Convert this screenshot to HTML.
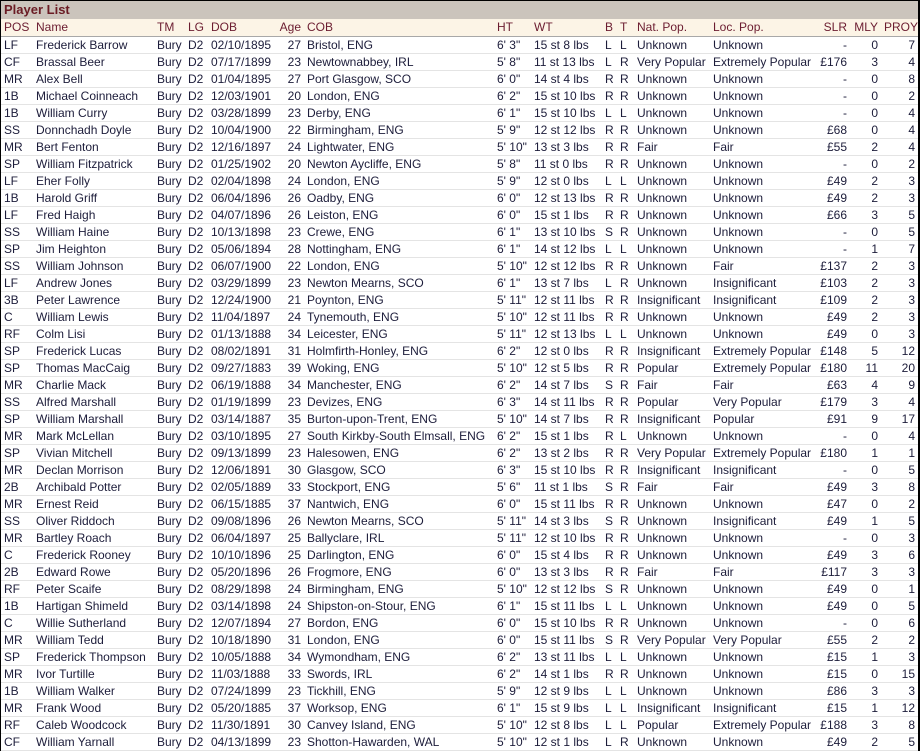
<!DOCTYPE html>
<html><head><meta charset="utf-8"><style>
*{margin:0;padding:0;box-sizing:border-box}
body{width:920px;height:751px;overflow:hidden;background:#fff;font-family:"Liberation Sans",Arial,sans-serif;font-size:12px}
#w{position:absolute;left:0;top:0;width:920px;height:751px;border:1px solid #000;border-right:2px solid #000}
.t{height:18px;background:#cbc4bc;color:#6b1c24;font-weight:bold;font-size:13px;line-height:18px;padding-left:3px}
table{border-collapse:collapse;table-layout:fixed;width:917px}
td,th{height:17px;padding:0 3px;white-space:nowrap;overflow:hidden;line-height:16px;color:#1c1c3a;font-weight:normal;text-align:left}
th{background:#fcf4e6;color:#6b1c30;border-bottom:1px solid #a8a8a8;height:17px}
td{border-bottom:1px solid #e4e4e4}
.r{text-align:right}
</style></head><body><div id="w">
<div class="t">Player List</div>
<table>
<colgroup><col style="width:32px"><col style="width:121px"><col style="width:31px"><col style="width:23px"><col style="width:68px"><col style="width:28px"><col style="width:190px"><col style="width:37px"><col style="width:71px"><col style="width:15px"><col style="width:17px"><col style="width:76px"><col style="width:107px"><col style="width:33px"><col style="width:31px"><col style="width:37px"></colgroup>
<tr><th>POS</th><th>Name</th><th>TM</th><th>LG</th><th>DOB</th><th class="r">Age</th><th>COB</th><th>HT</th><th>WT</th><th>B</th><th>T</th><th>Nat. Pop.</th><th>Loc. Pop.</th><th class="r">SLR</th><th class="r">MLY</th><th class="r">PROY</th></tr>
<tr><td>LF</td><td>Frederick Barrow</td><td>Bury</td><td>D2</td><td>02/10/1895</td><td class="r">27</td><td>Bristol, ENG</td><td>6' 3"</td><td>15 st 8 lbs</td><td>L</td><td>L</td><td>Unknown</td><td>Unknown</td><td class="r">-</td><td class="r">0</td><td class="r">7</td></tr>
<tr><td>CF</td><td>Brassal Beer</td><td>Bury</td><td>D2</td><td>07/17/1899</td><td class="r">23</td><td>Newtownabbey, IRL</td><td>5' 8"</td><td>11 st 13 lbs</td><td>L</td><td>R</td><td>Very Popular</td><td>Extremely Popular</td><td class="r">£176</td><td class="r">3</td><td class="r">4</td></tr>
<tr><td>MR</td><td>Alex Bell</td><td>Bury</td><td>D2</td><td>01/04/1895</td><td class="r">27</td><td>Port Glasgow, SCO</td><td>6' 0"</td><td>14 st 4 lbs</td><td>R</td><td>R</td><td>Unknown</td><td>Unknown</td><td class="r">-</td><td class="r">0</td><td class="r">8</td></tr>
<tr><td>1B</td><td>Michael Coinneach</td><td>Bury</td><td>D2</td><td>12/03/1901</td><td class="r">20</td><td>London, ENG</td><td>6' 2"</td><td>15 st 10 lbs</td><td>R</td><td>R</td><td>Unknown</td><td>Unknown</td><td class="r">-</td><td class="r">0</td><td class="r">2</td></tr>
<tr><td>1B</td><td>William Curry</td><td>Bury</td><td>D2</td><td>03/28/1899</td><td class="r">23</td><td>Derby, ENG</td><td>6' 1"</td><td>15 st 10 lbs</td><td>L</td><td>L</td><td>Unknown</td><td>Unknown</td><td class="r">-</td><td class="r">0</td><td class="r">4</td></tr>
<tr><td>SS</td><td>Donnchadh Doyle</td><td>Bury</td><td>D2</td><td>10/04/1900</td><td class="r">22</td><td>Birmingham, ENG</td><td>5' 9"</td><td>12 st 12 lbs</td><td>R</td><td>R</td><td>Unknown</td><td>Unknown</td><td class="r">£68</td><td class="r">0</td><td class="r">4</td></tr>
<tr><td>MR</td><td>Bert Fenton</td><td>Bury</td><td>D2</td><td>12/16/1897</td><td class="r">24</td><td>Lightwater, ENG</td><td>5' 10"</td><td>13 st 3 lbs</td><td>R</td><td>R</td><td>Fair</td><td>Fair</td><td class="r">£55</td><td class="r">2</td><td class="r">4</td></tr>
<tr><td>SP</td><td>William Fitzpatrick</td><td>Bury</td><td>D2</td><td>01/25/1902</td><td class="r">20</td><td>Newton Aycliffe, ENG</td><td>5' 8"</td><td>11 st 0 lbs</td><td>R</td><td>R</td><td>Unknown</td><td>Unknown</td><td class="r">-</td><td class="r">0</td><td class="r">2</td></tr>
<tr><td>LF</td><td>Eher Folly</td><td>Bury</td><td>D2</td><td>02/04/1898</td><td class="r">24</td><td>London, ENG</td><td>5' 9"</td><td>12 st 0 lbs</td><td>L</td><td>L</td><td>Unknown</td><td>Unknown</td><td class="r">£49</td><td class="r">2</td><td class="r">3</td></tr>
<tr><td>1B</td><td>Harold Griff</td><td>Bury</td><td>D2</td><td>06/04/1896</td><td class="r">26</td><td>Oadby, ENG</td><td>6' 0"</td><td>12 st 13 lbs</td><td>R</td><td>R</td><td>Unknown</td><td>Unknown</td><td class="r">£49</td><td class="r">2</td><td class="r">3</td></tr>
<tr><td>LF</td><td>Fred Haigh</td><td>Bury</td><td>D2</td><td>04/07/1896</td><td class="r">26</td><td>Leiston, ENG</td><td>6' 0"</td><td>15 st 1 lbs</td><td>R</td><td>R</td><td>Unknown</td><td>Unknown</td><td class="r">£66</td><td class="r">3</td><td class="r">5</td></tr>
<tr><td>SS</td><td>William Haine</td><td>Bury</td><td>D2</td><td>10/13/1898</td><td class="r">23</td><td>Crewe, ENG</td><td>6' 1"</td><td>13 st 10 lbs</td><td>S</td><td>R</td><td>Unknown</td><td>Unknown</td><td class="r">-</td><td class="r">0</td><td class="r">5</td></tr>
<tr><td>SP</td><td>Jim Heighton</td><td>Bury</td><td>D2</td><td>05/06/1894</td><td class="r">28</td><td>Nottingham, ENG</td><td>6' 1"</td><td>14 st 12 lbs</td><td>L</td><td>L</td><td>Unknown</td><td>Unknown</td><td class="r">-</td><td class="r">1</td><td class="r">7</td></tr>
<tr><td>SS</td><td>William Johnson</td><td>Bury</td><td>D2</td><td>06/07/1900</td><td class="r">22</td><td>London, ENG</td><td>5' 10"</td><td>12 st 12 lbs</td><td>R</td><td>R</td><td>Unknown</td><td>Fair</td><td class="r">£137</td><td class="r">2</td><td class="r">3</td></tr>
<tr><td>LF</td><td>Andrew Jones</td><td>Bury</td><td>D2</td><td>03/29/1899</td><td class="r">23</td><td>Newton Mearns, SCO</td><td>6' 1"</td><td>13 st 7 lbs</td><td>L</td><td>R</td><td>Unknown</td><td>Insignificant</td><td class="r">£103</td><td class="r">2</td><td class="r">3</td></tr>
<tr><td>3B</td><td>Peter Lawrence</td><td>Bury</td><td>D2</td><td>12/24/1900</td><td class="r">21</td><td>Poynton, ENG</td><td>5' 11"</td><td>12 st 11 lbs</td><td>R</td><td>R</td><td>Insignificant</td><td>Insignificant</td><td class="r">£109</td><td class="r">2</td><td class="r">3</td></tr>
<tr><td>C</td><td>William Lewis</td><td>Bury</td><td>D2</td><td>11/04/1897</td><td class="r">24</td><td>Tynemouth, ENG</td><td>5' 10"</td><td>12 st 11 lbs</td><td>R</td><td>R</td><td>Unknown</td><td>Unknown</td><td class="r">£49</td><td class="r">2</td><td class="r">3</td></tr>
<tr><td>RF</td><td>Colm Lisi</td><td>Bury</td><td>D2</td><td>01/13/1888</td><td class="r">34</td><td>Leicester, ENG</td><td>5' 11"</td><td>12 st 13 lbs</td><td>L</td><td>L</td><td>Unknown</td><td>Unknown</td><td class="r">£49</td><td class="r">0</td><td class="r">3</td></tr>
<tr><td>SP</td><td>Frederick Lucas</td><td>Bury</td><td>D2</td><td>08/02/1891</td><td class="r">31</td><td>Holmfirth-Honley, ENG</td><td>6' 2"</td><td>12 st 0 lbs</td><td>R</td><td>R</td><td>Insignificant</td><td>Extremely Popular</td><td class="r">£148</td><td class="r">5</td><td class="r">12</td></tr>
<tr><td>SP</td><td>Thomas MacCaig</td><td>Bury</td><td>D2</td><td>09/27/1883</td><td class="r">39</td><td>Woking, ENG</td><td>5' 10"</td><td>12 st 5 lbs</td><td>R</td><td>R</td><td>Popular</td><td>Extremely Popular</td><td class="r">£180</td><td class="r">11</td><td class="r">20</td></tr>
<tr><td>MR</td><td>Charlie Mack</td><td>Bury</td><td>D2</td><td>06/19/1888</td><td class="r">34</td><td>Manchester, ENG</td><td>6' 2"</td><td>14 st 7 lbs</td><td>S</td><td>R</td><td>Fair</td><td>Fair</td><td class="r">£63</td><td class="r">4</td><td class="r">9</td></tr>
<tr><td>SS</td><td>Alfred Marshall</td><td>Bury</td><td>D2</td><td>01/19/1899</td><td class="r">23</td><td>Devizes, ENG</td><td>6' 3"</td><td>14 st 11 lbs</td><td>R</td><td>R</td><td>Popular</td><td>Very Popular</td><td class="r">£179</td><td class="r">3</td><td class="r">4</td></tr>
<tr><td>SP</td><td>William Marshall</td><td>Bury</td><td>D2</td><td>03/14/1887</td><td class="r">35</td><td>Burton-upon-Trent, ENG</td><td>5' 10"</td><td>14 st 7 lbs</td><td>R</td><td>R</td><td>Insignificant</td><td>Popular</td><td class="r">£91</td><td class="r">9</td><td class="r">17</td></tr>
<tr><td>MR</td><td>Mark McLellan</td><td>Bury</td><td>D2</td><td>03/10/1895</td><td class="r">27</td><td>South Kirkby-South Elmsall, ENG</td><td>6' 2"</td><td>15 st 1 lbs</td><td>R</td><td>L</td><td>Unknown</td><td>Unknown</td><td class="r">-</td><td class="r">0</td><td class="r">4</td></tr>
<tr><td>SP</td><td>Vivian Mitchell</td><td>Bury</td><td>D2</td><td>09/13/1899</td><td class="r">23</td><td>Halesowen, ENG</td><td>6' 2"</td><td>13 st 2 lbs</td><td>R</td><td>R</td><td>Very Popular</td><td>Extremely Popular</td><td class="r">£180</td><td class="r">1</td><td class="r">1</td></tr>
<tr><td>MR</td><td>Declan Morrison</td><td>Bury</td><td>D2</td><td>12/06/1891</td><td class="r">30</td><td>Glasgow, SCO</td><td>6' 3"</td><td>15 st 10 lbs</td><td>R</td><td>R</td><td>Insignificant</td><td>Insignificant</td><td class="r">-</td><td class="r">0</td><td class="r">5</td></tr>
<tr><td>2B</td><td>Archibald Potter</td><td>Bury</td><td>D2</td><td>02/05/1889</td><td class="r">33</td><td>Stockport, ENG</td><td>5' 6"</td><td>11 st 1 lbs</td><td>S</td><td>R</td><td>Fair</td><td>Fair</td><td class="r">£49</td><td class="r">3</td><td class="r">8</td></tr>
<tr><td>MR</td><td>Ernest Reid</td><td>Bury</td><td>D2</td><td>06/15/1885</td><td class="r">37</td><td>Nantwich, ENG</td><td>6' 0"</td><td>15 st 11 lbs</td><td>R</td><td>R</td><td>Unknown</td><td>Unknown</td><td class="r">£47</td><td class="r">0</td><td class="r">2</td></tr>
<tr><td>SS</td><td>Oliver Riddoch</td><td>Bury</td><td>D2</td><td>09/08/1896</td><td class="r">26</td><td>Newton Mearns, SCO</td><td>5' 11"</td><td>14 st 3 lbs</td><td>S</td><td>R</td><td>Unknown</td><td>Insignificant</td><td class="r">£49</td><td class="r">1</td><td class="r">5</td></tr>
<tr><td>MR</td><td>Bartley Roach</td><td>Bury</td><td>D2</td><td>06/04/1897</td><td class="r">25</td><td>Ballyclare, IRL</td><td>5' 11"</td><td>12 st 10 lbs</td><td>R</td><td>R</td><td>Unknown</td><td>Unknown</td><td class="r">-</td><td class="r">0</td><td class="r">3</td></tr>
<tr><td>C</td><td>Frederick Rooney</td><td>Bury</td><td>D2</td><td>10/10/1896</td><td class="r">25</td><td>Darlington, ENG</td><td>6' 0"</td><td>15 st 4 lbs</td><td>R</td><td>R</td><td>Unknown</td><td>Unknown</td><td class="r">£49</td><td class="r">3</td><td class="r">6</td></tr>
<tr><td>2B</td><td>Edward Rowe</td><td>Bury</td><td>D2</td><td>05/20/1896</td><td class="r">26</td><td>Frogmore, ENG</td><td>6' 0"</td><td>13 st 3 lbs</td><td>R</td><td>R</td><td>Fair</td><td>Fair</td><td class="r">£117</td><td class="r">3</td><td class="r">3</td></tr>
<tr><td>RF</td><td>Peter Scaife</td><td>Bury</td><td>D2</td><td>08/29/1898</td><td class="r">24</td><td>Birmingham, ENG</td><td>5' 10"</td><td>12 st 12 lbs</td><td>S</td><td>R</td><td>Unknown</td><td>Unknown</td><td class="r">£49</td><td class="r">0</td><td class="r">1</td></tr>
<tr><td>1B</td><td>Hartigan Shimeld</td><td>Bury</td><td>D2</td><td>03/14/1898</td><td class="r">24</td><td>Shipston-on-Stour, ENG</td><td>6' 1"</td><td>15 st 11 lbs</td><td>L</td><td>L</td><td>Unknown</td><td>Unknown</td><td class="r">£49</td><td class="r">0</td><td class="r">5</td></tr>
<tr><td>C</td><td>Willie Sutherland</td><td>Bury</td><td>D2</td><td>12/07/1894</td><td class="r">27</td><td>Bordon, ENG</td><td>6' 0"</td><td>15 st 10 lbs</td><td>R</td><td>R</td><td>Unknown</td><td>Unknown</td><td class="r">-</td><td class="r">0</td><td class="r">6</td></tr>
<tr><td>MR</td><td>William Tedd</td><td>Bury</td><td>D2</td><td>10/18/1890</td><td class="r">31</td><td>London, ENG</td><td>6' 0"</td><td>15 st 11 lbs</td><td>S</td><td>R</td><td>Very Popular</td><td>Very Popular</td><td class="r">£55</td><td class="r">2</td><td class="r">2</td></tr>
<tr><td>SP</td><td>Frederick Thompson</td><td>Bury</td><td>D2</td><td>10/05/1888</td><td class="r">34</td><td>Wymondham, ENG</td><td>6' 2"</td><td>13 st 11 lbs</td><td>L</td><td>L</td><td>Unknown</td><td>Unknown</td><td class="r">£15</td><td class="r">1</td><td class="r">3</td></tr>
<tr><td>MR</td><td>Ivor Turtille</td><td>Bury</td><td>D2</td><td>11/03/1888</td><td class="r">33</td><td>Swords, IRL</td><td>6' 2"</td><td>14 st 1 lbs</td><td>R</td><td>R</td><td>Unknown</td><td>Unknown</td><td class="r">£15</td><td class="r">0</td><td class="r">15</td></tr>
<tr><td>1B</td><td>William Walker</td><td>Bury</td><td>D2</td><td>07/24/1899</td><td class="r">23</td><td>Tickhill, ENG</td><td>5' 9"</td><td>12 st 9 lbs</td><td>L</td><td>L</td><td>Unknown</td><td>Unknown</td><td class="r">£86</td><td class="r">3</td><td class="r">3</td></tr>
<tr><td>MR</td><td>Frank Wood</td><td>Bury</td><td>D2</td><td>05/20/1885</td><td class="r">37</td><td>Worksop, ENG</td><td>6' 1"</td><td>15 st 9 lbs</td><td>L</td><td>L</td><td>Insignificant</td><td>Insignificant</td><td class="r">£15</td><td class="r">1</td><td class="r">12</td></tr>
<tr><td>RF</td><td>Caleb Woodcock</td><td>Bury</td><td>D2</td><td>11/30/1891</td><td class="r">30</td><td>Canvey Island, ENG</td><td>5' 10"</td><td>12 st 8 lbs</td><td>L</td><td>L</td><td>Popular</td><td>Extremely Popular</td><td class="r">£188</td><td class="r">3</td><td class="r">8</td></tr>
<tr><td>CF</td><td>William Yarnall</td><td>Bury</td><td>D2</td><td>04/13/1899</td><td class="r">23</td><td>Shotton-Hawarden, WAL</td><td>5' 10"</td><td>12 st 1 lbs</td><td>L</td><td>R</td><td>Unknown</td><td>Unknown</td><td class="r">£49</td><td class="r">2</td><td class="r">5</td></tr>
</table></div></body></html>
